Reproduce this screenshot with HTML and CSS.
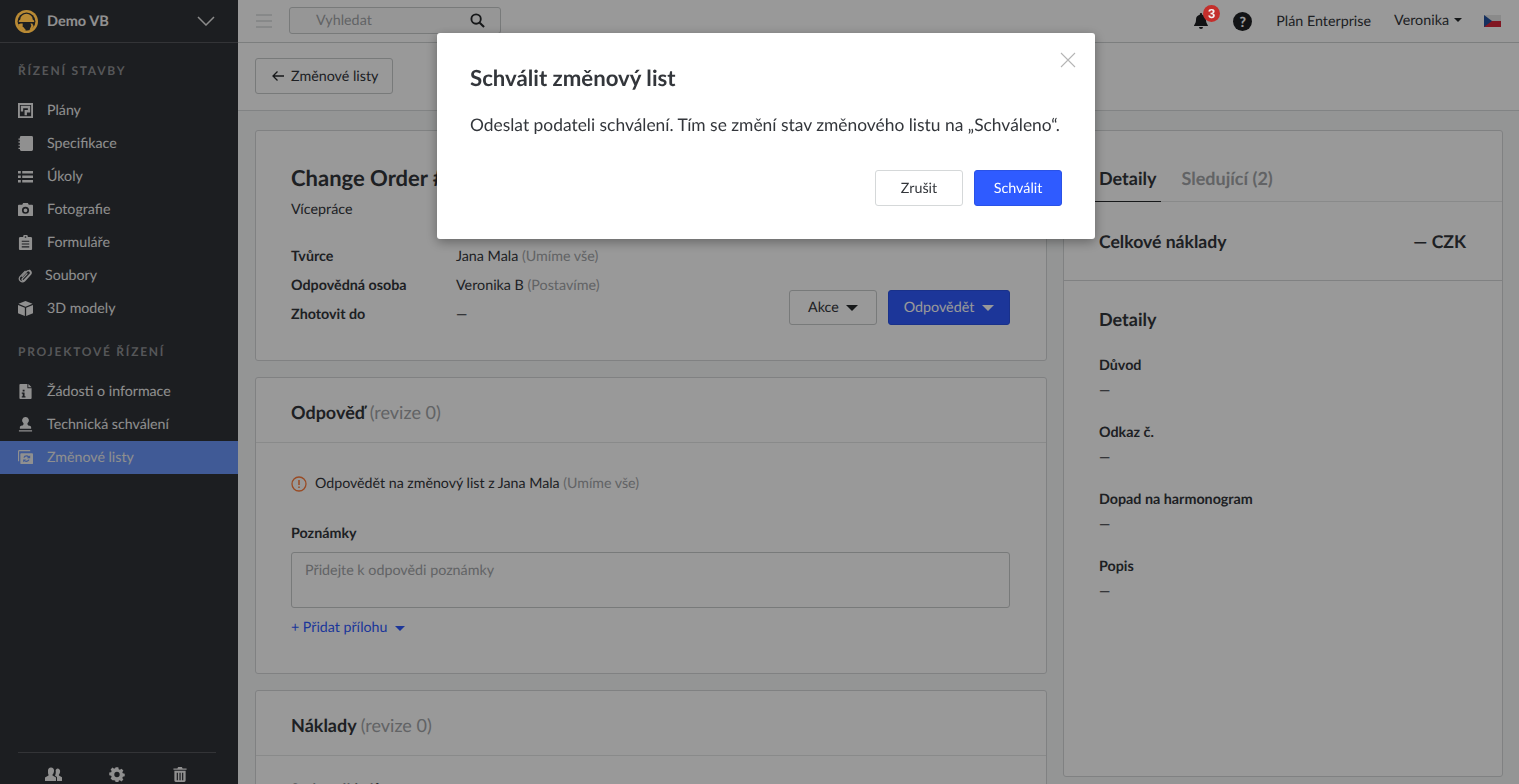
FILE: index.html
```html
<!DOCTYPE html>
<html lang="cs">
<head>
<meta charset="utf-8">
<title>Změnové listy</title>
<link rel="stylesheet" href="styles.css">
</head>
<body>
<div class="app">
  <aside class="sidebar">
    <div class="brand">
      <svg class="logo" viewBox="0 0 24 24"><circle cx="12" cy="12" r="12" fill="#b98a34"/><circle cx="12" cy="12" r="9.300" fill="#1d1f22"/><path d="M9 21.200A9.500 9.500 0 0 1 3 15l3-1h12l1.500 3-2.500 3.500z" fill="#b98a34"/><path d="M5.500 10a6.500 6 0 0 1 13 0l1.500 1.200v1.300H4v-1.300z" fill="#b98a34"/><path d="M8 13.500h8l1 3-2 4.500h-3.500L8 17z" fill="#1d1f22"/></svg>
      <span class="brand-name">Demo VB</span>
      <svg class="brand-chev" viewBox="0 0 18 10"><path d="M1 1l8 8 8-8" fill="none" stroke="currentColor" stroke-width="1.500"/></svg>
    </div>
    <div class="side-label">ŘÍZENÍ STAVBY</div>
    <nav>
      <a class="item"><svg viewBox="0 0 16 16"><path fill-rule="evenodd" d="M0 0h16v16H0zM2 2v12h12V2zM3 3h10v7H9.500v3H7V7.500h3.500V5.500H5.500V9H3z"/></svg>Plány</a>
      <a class="item"><svg viewBox="0 0 16 16"><path fill-rule="evenodd" d="M3.500 0h11A1.500 1.500 0 0 1 16 1.500v13a1.500 1.500 0 0 1-1.500 1.500h-11A1.500 1.500 0 0 1 2 14.500V13.800H.5v-1.300H2v-2H.5V9.200H2v-2H.5V5.900H2v-2H.5V2.600H2V1.500A1.500 1.500 0 0 1 3.500 0z"/></svg>Specifikace</a>
      <a class="item"><svg viewBox="0 0 16 16"><path d="M0 2h3v2.800H0zM4.500 2H16v2.800H4.500zM0 6.800h3v2.800H0zM4.500 6.800H16v2.800H4.500zM0 11.600h3v2.800H0zM4.500 11.600H16v2.800H4.500z"/></svg>Úkoly</a>
      <a class="item"><svg viewBox="0 0 16 16"><path fill-rule="evenodd" d="M1 3h3.500l1-2h5l1 2H15a1 1 0 0 1 1 1v10a1 1 0 0 1-1 1H1a1 1 0 0 1-1-1V4a1 1 0 0 1 1-1zM8 5a3.800 3.800 0 1 0 0 7.600A3.800 3.800 0 0 0 8 5zm0 1.800a2 2 0 1 1 0 4 2 2 0 0 1 0-4z"/></svg>Fotografie</a>
      <a class="item"><svg viewBox="0 0 16 16"><path fill-rule="evenodd" d="M2.500 2H5.500a2.500 2.500 0 0 1 5 0h3A1.500 1.500 0 0 1 15 3.500V15a1 1 0 0 1-1 1H2a1 1 0 0 1-1-1V3.500A1.500 1.500 0 0 1 2.500 2zM8 1.200a.9.9 0 1 0 0 1.800.9.9 0 0 0 0-1.800zM4 6v1.200h8V6zM4 9v1.200h8V9zM4 12v1.200h8V12z"/></svg>Formuláře</a>
      <a class="item tight"><svg viewBox="0 0 16 16"><path d="M4 9.500l5.500-6a2.200 2.200 0 0 1 3.200 3L6.500 13a1.200 1.200 0 0 1-1.800-1.600L10 5.800M12 2l1 .8a3 3 0 0 1 .2 4.200L7 14a3.400 3.400 0 0 1-5-4.500L8 3" fill="none" stroke="currentColor" stroke-width="1.300"/></svg>Soubory</a>
      <a class="item"><svg viewBox="0 0 16 16"><path d="M8 0l7.500 3L8 6 .5 3zM0 4.300l7.300 3V16L0 13zM16 4.300l-7.300 3V16L16 13z"/></svg>3D modely</a>
    </nav>
    <div class="side-label second">PROJEKTOVÉ ŘÍZENÍ</div>
    <nav>
      <a class="item"><svg viewBox="0 0 16 16"><path fill-rule="evenodd" d="M2.500 0H10v4.500h4.500V15a1 1 0 0 1-1 1H2.500a1 1 0 0 1-1-1V1a1 1 0 0 1 1-1zM11 0l3.500 3.500H11zM5 6v2h2V6zM4 9v1.500h1V13H4v1.500h4V13H7V9z"/></svg>Žádosti o informace</a>
      <a class="item"><svg viewBox="0 0 16 16"><path d="M8 0a3.500 3.500 0 0 1 2.500 6c-.7.800-.5 2 .2 2.800.400.500 3.300.400 3.300 2.200v1.500H2V11c0-1.800 2.900-1.700 3.300-2.200C6 8 6.200 6.800 5.500 6A3.500 3.500 0 0 1 8 0zM1 14h14v1.500H1z"/></svg>Technická schválení</a>
      <a class="item active"><svg viewBox="0 0 16 16"><path fill-rule="evenodd" d="M3.500 3.500H15a1 1 0 0 1 1 1V14a1 1 0 0 1-1 1H3.500a1 1 0 0 1-1-1V4.500a1 1 0 0 1 1-1zM9 5.500a3.500 3.500 0 0 0-3.300 2.400l1.400.4a2 2 0 0 1 3.400-.6L9.500 8.700H13V5.500l-1.200 1.100A3.500 3.500 0 0 0 9 5.500zM5.500 10v3l1.200-1.100a3.500 3.500 0 0 0 5.600-1.500l-1.400-.4a2 2 0 0 1-3.300.8L9 10z"/><path d="M0 1.500A1.500 1.500 0 0 1 1.500 0H13v1.200H1.500a.3.300 0 0 0-.3.300V12H0z"/></svg>Změnové listy</a>
    </nav>
    <div class="side-foot">
      <svg viewBox="0 0 18 14"><path d="M6 0a3 3 0 0 1 3 3.500c0 1.500-.8 3-1.500 3.500v1l3.500 2v3.500H0V10l3.500-2V7C3 6.500 3 5 3 3.500A3 3 0 0 1 6 0zM12.500 1a2.600 2.600 0 0 1 2.600 3c0 1.300-.6 2.500-1.200 3v1l3.100 1.800V13.500H12V9.500L10 8.200c.3-.5.800-2 .8-4a2.600 2.600 0 0 1 1.700-3.200z"/></svg>
      <svg viewBox="0 0 16 16"><path fill-rule="evenodd" d="M6.500 0h3l.4 2.100 1.300.6L13 1.500l2.100 2.100-1.200 1.800.6 1.300 2.100.4v3l-2.100.4-.6 1.300 1.200 1.800-2.100 2.100-1.800-1.200-1.300.6-.4 2.100h-3l-.4-2.100-1.300-.6L3 14.500.9 12.400l1.200-1.800-.6-1.300L-.6 8.900v-3l2.100-.4.600-1.300L.9 2.400 3 .3l1.800 1.200 1.300-.6zM8 5a3 3 0 1 0 0 6 3 3 0 0 0 0-6z" transform="translate(.3 .3) scale(.96)"/></svg>
      <svg viewBox="0 0 14 16"><path fill-rule="evenodd" d="M5 0h4l.8 1.500H14V3H0V1.500h4.200zM1 4h12v10.500a1.500 1.500 0 0 1-1.500 1.500h-9A1.500 1.500 0 0 1 1 14.500zM3.500 6v8h1.300V6zM6.400 6v8h1.300V6zM9.200 6v8h1.300V6z"/></svg>
    </div>
  </aside>

  <div class="main">
    <header class="topbar">
      <svg class="burger" viewBox="0 0 16 14"><path d="M0 1h16M0 7h16M0 13h16" stroke="#c5c8c9" stroke-width="1"/></svg>
      <div class="search">
        <span>Vyhledat</span>
        <svg viewBox="0 0 16 16"><circle cx="6.500" cy="6.500" r="5" fill="none" stroke="#26282b" stroke-width="2"/><path d="M10.300 10.300l4.700 4.700" stroke="#26282b" stroke-width="2.200"/></svg>
      </div>
      <div class="top-right">
        <div class="bell">
          <svg viewBox="0 0 16 18"><path d="M8 1a1.200 1.200 0 0 1 1.200 1.200v.6A5 5 0 0 1 13 7.700c0 3.800 2 5 2 6.300H1c0-1.300 2-2.500 2-6.300A5 5 0 0 1 6.800 2.800v-.6A1.200 1.200 0 0 1 8 1zM6 15h4a2 2 0 0 1-4 0z" fill="#1d1f22"/></svg>
          <span class="badge">3</span>
        </div>
        <span class="help">?</span>
        <span class="plan">Plán Enterprise</span>
        <span class="user">Veronika <i class="caret small"></i></span>
        <svg class="flag" viewBox="0 0 17 12"><rect width="17" height="6" fill="#e6e6e6"/><rect y="6" width="17" height="6" fill="#d7263a"/><path d="M0 0l8 6-8 6z" fill="#23509e"/></svg>
      </div>
    </header>

    <div class="subbar">
      <a class="back"><svg viewBox="0 0 14 12"><path d="M13 6H2M6.500 1.500L2 6l4.500 4.500" fill="none" stroke="#26282b" stroke-width="1.300"/></svg>Změnové listy</a>
    </div>

    <div class="content">
      <div class="left">
        <section class="card head-card">
          <h1>Change Order #1</h1>
          <div class="subtitle">Vícepráce</div>
          <div class="bottom">
            <dl class="facts">
              <div><dt>Tvůrce</dt><dd>Jana Mala <em>(Umíme vše)</em></dd></div>
              <div><dt>Odpovědná osoba</dt><dd>Veronika B <em>(Postavíme)</em></dd></div>
              <div><dt>Zhotovit do</dt><dd>—</dd></div>
            </dl>
            <div class="actions">
              <a class="btn default">Akce <i class="caret"></i></a>
              <a class="btn primary">Odpovědět <i class="caret light"></i></a>
            </div>
          </div>
        </section>

        <section class="card answer">
          <h2 class="card-title">Odpověď <em>(revize 0)</em></h2>
          <div class="card-body">
            <div class="notice">
              <svg viewBox="0 0 16 16"><circle cx="8" cy="8" r="7" fill="none" stroke="#ff7d3c" stroke-width="1.300"/><path d="M8 4v5M8 10.500v1.500" stroke="#ff7d3c" stroke-width="1.500"/></svg>
              <span>Odpovědět na změnový list z Jana Mala <em>(Umíme vše)</em></span>
            </div>
            <label class="field-label">Poznámky</label>
            <div class="textarea">Přidejte k odpovědi poznámky</div>
            <a class="add">+ Přidat přílohu <i class="caret blue"></i></a>
          </div>
        </section>

        <section class="card costs">
          <h2 class="card-title">Náklady <em>(revize 0)</em></h2>
          <div class="card-body"><label class="field-label">Sazba nákladů</label></div>
        </section>
      </div>

      <aside class="right">
        <div class="tabs"><span class="tab on">Detaily</span><span class="tab">Sledující (2)</span></div>
        <div class="total"><span>Celkové náklady</span><span>— CZK</span></div>
        <div class="details">
          <h3>Detaily</h3>
          <div class="d-row"><b>Důvod</b><span>—</span></div>
          <div class="d-row"><b>Odkaz č.</b><span>—</span></div>
          <div class="d-row"><b>Dopad na harmonogram</b><span>—</span></div>
          <div class="d-row"><b>Popis</b><span>—</span></div>
        </div>
      </aside>
    </div>
  </div>
</div>

<div class="overlay">
  <div class="modal">
    <svg class="close" viewBox="0 0 16 16"><path d="M1 1l14 14M15 1L1 15" stroke="#b5b5b5" stroke-width="1.100"/></svg>
    <h2>Schválit změnový list</h2>
    <p>Odeslat podateli schválení. Tím se změní stav změnového listu na „Schváleno“.</p>
    <div class="modal-actions">
      <a class="mbtn cancel">Zrušit</a>
      <a class="mbtn ok">Schválit</a>
    </div>
  </div>
</div>
</body>
</html>
```
FILE: styles.css
```css
* { box-sizing: border-box; }
html, body { margin: 0; height: 100%; overflow: hidden; }
body { font-family: Lato, "Open Sans", sans-serif; font-size: 14.3px; color: #33363b; background: #f7f9f9; text-rendering: geometricPrecision; }
em { font-style: normal; color: #a3a6a9; }
.app { display: flex; height: 784px; overflow: hidden; }

.sidebar { width: 238px; flex: none; height: 784px; background: #303338; color: #f0f0f0; display: flex; flex-direction: column; }
.brand { height: 43px; flex: none; display: flex; align-items: center; padding: 0 14px; border-bottom: 1px solid #55585c; }
.logo { position: relative; z-index: 5; width: 23px; height: 23px; margin-left: 1px; margin-right: 9px; }
.brand-name { font-weight: 700; font-size: 14.5px; flex: 1; }
.brand-chev { width: 18px; height: 10px; margin-right: 9px; color: #e8e8e8; }
.side-label { font-size: 12px; font-weight: 700; letter-spacing: 1.75px; color: #8f9194; padding-left: 18px; line-height: 16px; margin: 20px 0 15px; }
.side-label.second { margin-top: 19px; }
.item { display: flex; align-items: center; height: 33px; padding-left: 18px; font-size: 14.2px; color: #eeeeee; }
.item svg { width: 15px; height: 15px; margin-right: 14px; fill: #f0f0f0; flex: none; }
.item.tight svg { margin-right: 12px; }
.item.active { background: #6b96fa; }
.side-foot { margin: auto 22px 0 18px; height: 32px; border-top: 1px solid #55585c; display: flex; justify-content: space-between; align-items: flex-end; padding: 0 27px 2px; }
.side-foot svg { height: 15px; width: 18px; fill: #f0f0f0; }

.main { flex: 1; min-width: 0; display: flex; flex-direction: column; }
.topbar { height: 43px; flex: none; background: #fff; border-bottom: 1px solid #cfd2d3; display: flex; align-items: center; padding: 0 18px 0 18px; }
.burger { width: 16px; height: 14px; margin-right: 17px; }
.search { width: 212px; height: 27px; margin-bottom: 2px; border: 1px solid #c8cbcc; border-radius: 3px; background: #fbfbfb; display: flex; align-items: center; justify-content: space-between; padding: 0 15px 0 26px; color: #a3a6a9; }
.search svg { width: 15px; height: 15px; }
.top-right { margin-left: auto; display: flex; align-items: center; }
.bell { position: relative; width: 18px; height: 18px; margin-right: 23px; }
.bell svg { width: 18px; height: 18px; display: block; }
.badge { position: absolute; z-index: 5; left: 11px; top: -7px; width: 17px; height: 17px; border-radius: 50%; background: #c42f2c; color: #f2f2f2; font-size: 13px; font-weight: 700; line-height: 17px; text-align: center; font-family: "Liberation Sans", sans-serif; }
.help { width: 19px; height: 19px; border-radius: 50%; background: #1f2124; color: #fff; font-size: 14px; font-weight: 900; line-height: 19px; text-align: center; margin-right: 24px; }
.plan { margin-right: 23px; }
.user { margin-right: 22px; display: flex; align-items: center; gap: 5px; margin-bottom: 2px; }
.flag { width: 17px; height: 12px; }
.caret { display: inline-block; width: 0; height: 0; border-left: 6px solid transparent; border-right: 6px solid transparent; border-top: 6px solid #26282b; vertical-align: 2px; margin-left: 7px; }
.caret.small { border-width: 4px 4px 0; margin-left: 0; }
.caret.light { border-top-color: #fff; margin-left: 8px; }
.caret.blue { border-top-color: #2f5bff; border-width: 5px 5px 0; margin-left: 4px; vertical-align: 1px; }

.subbar { height: 68px; flex: none; background: #fff; border-bottom: 1px solid #d8dbdc; padding: 15px 17px; }
.back { display: inline-flex; align-items: center; width: 138px; height: 36px; border: 1px solid #c8cbcc; border-radius: 3px; padding-left: 15px; gap: 6px; }
.back svg { width: 14px; height: 12px; }

.content { display: flex; gap: 16px; padding: 19px 16px 0 17px; align-items: flex-start; }
.left { width: 792px; flex: none; display: flex; flex-direction: column; gap: 16px; }
.card { background: #fff; border: 1px solid #d5d8d9; border-radius: 3px; }
h1 { margin: 0; font-size: 22px; font-weight: 700; line-height: 28px; }
.head-card { height: 231px; padding: 33px 36px 0 35px; }
.subtitle { margin-top: 8px; line-height: 20px; }
.bottom { display: flex; align-items: flex-end; justify-content: space-between; margin-top: 22px; }
.facts { margin: 0; }
.facts div { display: flex; height: 29px; align-items: center; }
.facts dt { width: 165px; font-weight: 700; }
.facts dd { margin: 0; }
.actions { display: flex; gap: 11px; margin-bottom: 4px; }
.btn { height: 35px; display: flex; align-items: center; justify-content: center; border-radius: 3px; }
.btn .caret { vertical-align: 0; }
.btn.default { width: 88px; border: 1px solid #c8cbcc; }
.btn.primary { width: 122px; background: #2f5bff; border: 1px solid #2a52e6; color: #fff; }
.card-title { margin: 0; height: 65px; padding: 0 35px; font-size: 18px; font-weight: 700; line-height: 68px; border-bottom: 1px solid #e4e6e7; }
.card-title em { font-weight: 400; font-size: 18px; }
.card-body { padding: 31px 36px 35px 35px; }
.costs .card-body { padding-top: 24px; }
.notice { display: flex; align-items: center; gap: 8px; line-height: 20px; font-size: 14.2px; }
.notice svg { width: 16px; height: 16px; }
.field-label { display: block; font-weight: 700; line-height: 20px; }
.notice + .field-label { margin-top: 30px; }
.textarea { height: 56px; margin-top: 8px; border: 1px solid #c8cbcc; border-radius: 3px; padding: 8px 13px; line-height: 20px; color: #a3a6a9; }
.add { display: block; margin-top: 10px; line-height: 20px; color: #2f5bff; font-size: 14.2px; }

.right { width: 440px; height: 647px; flex: none; background: #fff; border: 1px solid #d5d8d9; border-radius: 3px; padding: 0; }
.tabs { display: flex; height: 71px; padding: 0 35px; gap: 20px; border-bottom: 1px solid #e4e6e7; align-items: flex-end; }
.tab { font-size: 18px; font-weight: 700; color: #a3a6a9; height: 36px; line-height: 26px; }
.tab.on { color: #33363b; border-bottom: 1px solid #26282b; margin-left: -4px; padding: 0 5px 0 4px; height: 37px; margin-bottom: -1px; }
.total { display: flex; justify-content: space-between; height: 79px; align-items: center; padding: 0 36px 0 35px; font-size: 17.6px; font-weight: 700; border-bottom: 1px solid #d5d8d9; }
.details { padding: 24px 35px; }
h3 { margin: 0 0 21px; font-size: 18px; font-weight: 700; line-height: 28px; }
.d-row { display: flex; flex-direction: column; height: 67px; line-height: 24px; }
.d-row span { color: #33363b; margin-top: 1px; }

.overlay { position: fixed; inset: 0; background: rgba(0,0,0,.4); display: flex; justify-content: center; align-items: flex-start; padding: 33px 0 0 13px; }
.modal { position: relative; width: 658px; height: 206px; background: #fff; border-radius: 3px; padding: 30px 33px; box-shadow: 0 3px 12px rgba(0,0,0,.35); }
.close { position: absolute; right: 19px; top: 19px; width: 16px; height: 16px; }
.modal h2 { margin: 0; font-size: 22.2px; font-weight: 700; line-height: 30px; color: #33363b; }
.modal p { margin: 19px 0 0; font-size: 17.4px; line-height: 26px; white-space: nowrap; }
.modal-actions { position: absolute; right: 33px; bottom: 33px; display: flex; gap: 11px; }
.mbtn { width: 88px; height: 36px; display: flex; align-items: center; justify-content: center; border-radius: 3px; }
.mbtn.cancel { border: 1px solid #d5d8d9; }
.mbtn.ok { background: #2f5bff; color: #fff; border: 1px solid #2a52e6; }
```
